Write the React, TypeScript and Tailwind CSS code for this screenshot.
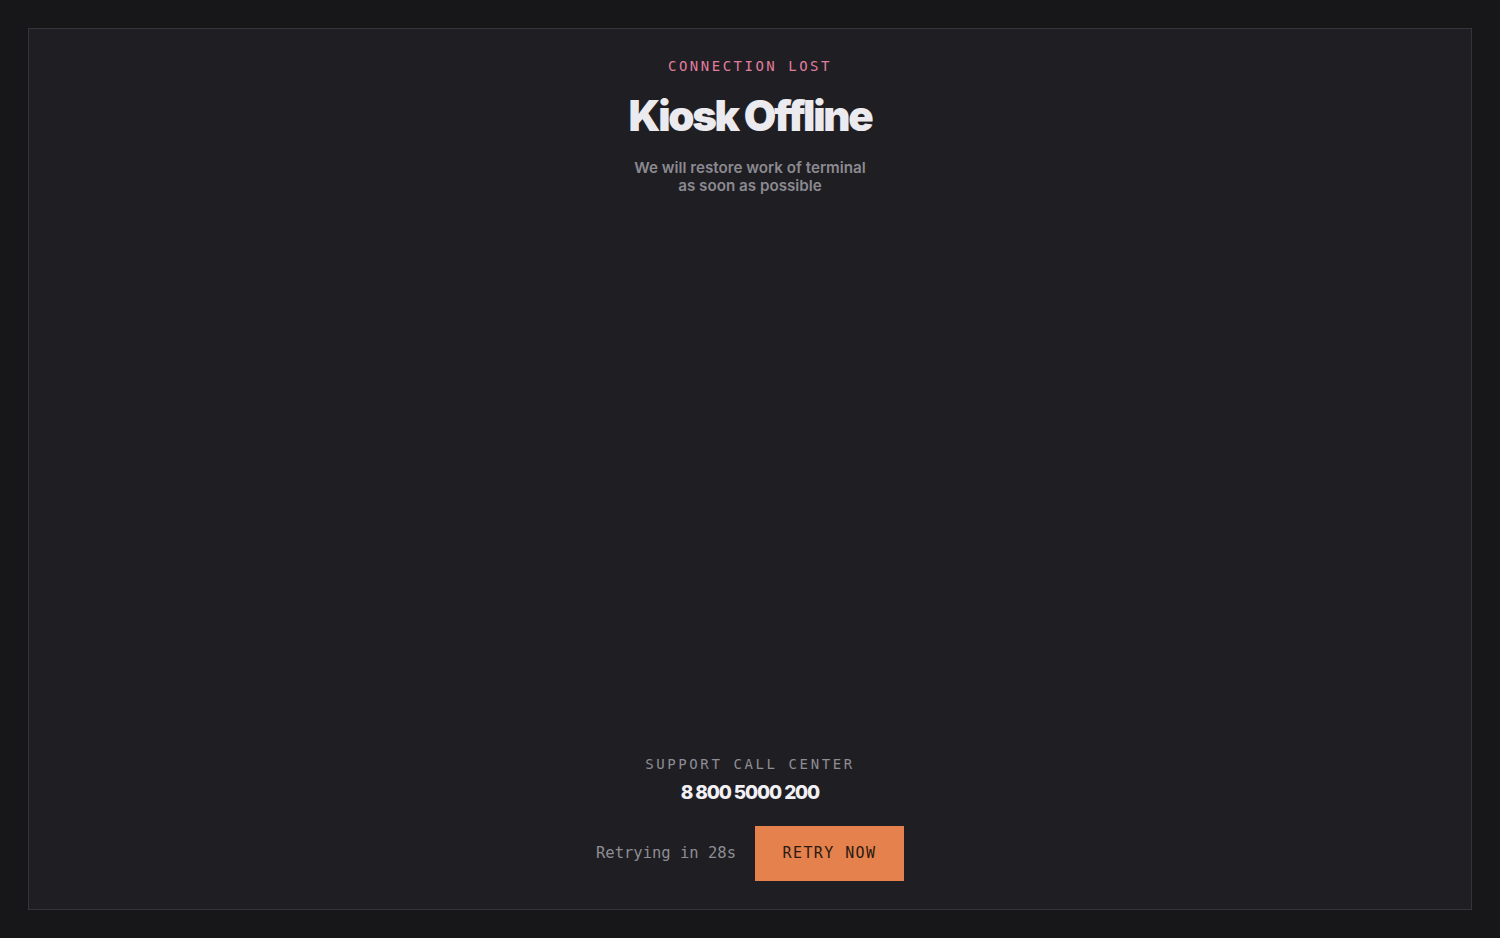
import React, { useEffect, useState } from "react";

const mono = "font-['DejaVu_Sans_Mono','Liberation_Mono',monospace]";
const sans = "font-['Inter','Noto_Sans',sans-serif]";

export default function App() {
  const [seconds, setSeconds] = useState(28);

  useEffect(() => {
    // countdown is frozen for the screenshot, kept simple
    const t = setTimeout(() => setSeconds((s) => s), 1000);
    return () => clearTimeout(t);
  }, []);

  return (
    <div className="w-full h-[938px] bg-[#17171a] p-[28px]">
      <div className="h-full border border-[#34343a] bg-[#1f1e23] flex flex-col items-center justify-between pt-[27px] pb-[28px]">
        {/* header */}
        <div className="flex flex-col items-center">
          <p className={`${mono} text-[14px] leading-[20px] tracking-[2.5px] text-[#e07d9f]`}>
            CONNECTION LOST
          </p>
          <h1 className={`${sans} mt-[19px] text-[42px] leading-[42px] font-black tracking-[-0.055em] text-[#ebeaef]`}>
            Kiosk Offline
          </h1>
          <p className={`${sans} mt-[22px] text-[15.2px] leading-[18px] font-semibold text-[#8b8a90] text-center`}>
            We will restore work of terminal
            <br />
            as soon as possible
          </p>
        </div>

        {/* support + retry */}
        <div className="flex flex-col items-center">
          <p className={`${mono} text-[14px] leading-[20px] tracking-[2.6px] text-[#8e8d93]`}>
            SUPPORT CALL CENTER
          </p>
          <p className={`${sans} mt-[7px] text-[19px] leading-[24px] font-extrabold tracking-[-0.06em] text-[#f1f0f4]`}>
            8 800 5000 200
          </p>
          <div className="mt-[21px] flex items-center gap-[19px]">
            <span className={`${mono} text-[15.5px] tracking-[0px] text-[#8e8d93]`}>
              Retrying in {seconds}s
            </span>
            <button
              type="button"
              className={`${mono} w-[149px] h-[55px] bg-[#e5814c] text-[#2a1a12] text-[15px] tracking-[1.4px] flex items-center justify-center`}
            >
              RETRY NOW
            </button>
          </div>
        </div>
      </div>
    </div>
  );
}
